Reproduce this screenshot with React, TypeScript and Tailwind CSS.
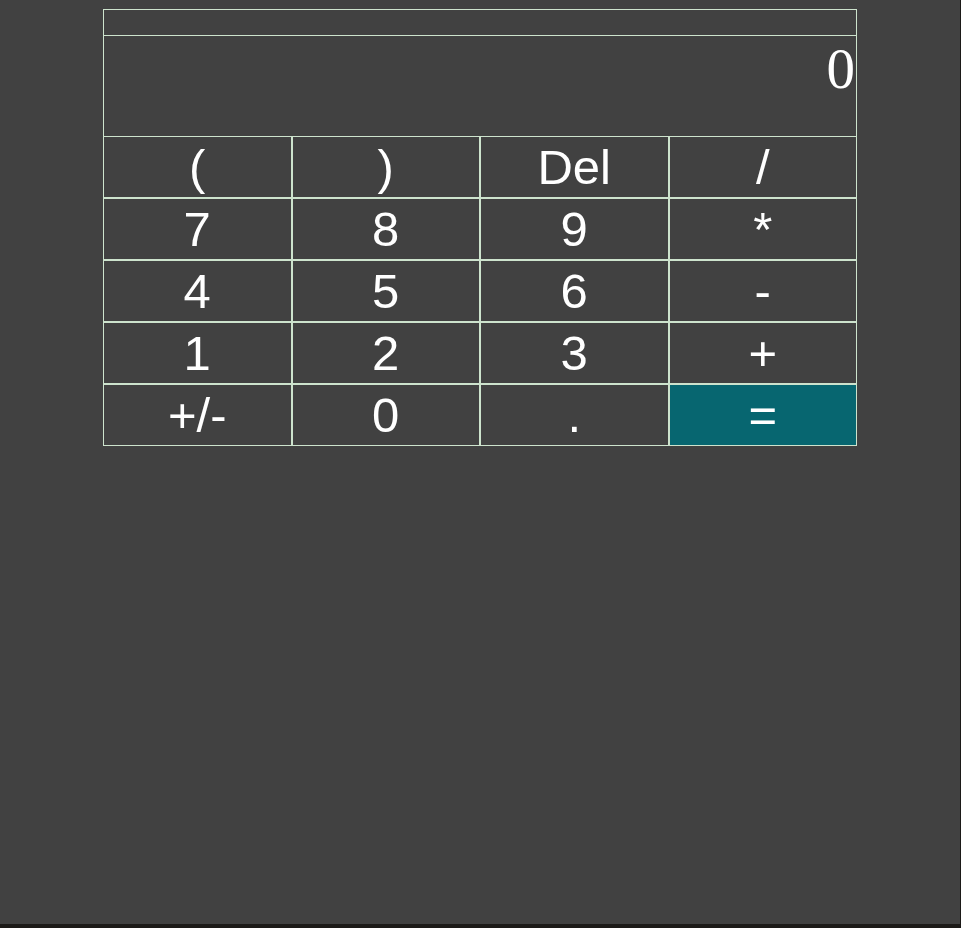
import React from "react";

const keys = [
  "(", ")", "Del", "/",
  "7", "8", "9", "*",
  "4", "5", "6", "-",
  "1", "2", "3", "+",
  "+/-", "0", ".", "=",
];

export default function App() {
  return (
    <div className="w-[961px] h-[928px] bg-[#1c1a18]">
      <div className="w-[960px] h-[924px] bg-[#414141] pt-[9px]">
        <div className="w-[754px] mx-auto">
          <div className="h-[27px] border border-[#cde3cd]" />
          <div className="h-[100px] border-x border-[#cde3cd] flex justify-end pt-[1px] pr-px">
            <span
              className="text-white text-[57px] leading-[63px]"
              style={{ fontFamily: '"Liberation Serif", "Times New Roman", serif' }}
            >
              0
            </span>
          </div>
          <div className="grid grid-cols-4">
            {keys.map((k) => (
              <button
                key={k}
                className={`h-[62px] border border-[#cde3cd] text-white text-[49px] leading-none flex items-center justify-center ${
                  k === "=" ? "bg-[#076670]" : "bg-transparent"
                }`}
                style={{ fontFamily: '"Liberation Sans", Arial, sans-serif' }}
              >
                {k}
              </button>
            ))}
          </div>
        </div>
      </div>
    </div>
  );
}
